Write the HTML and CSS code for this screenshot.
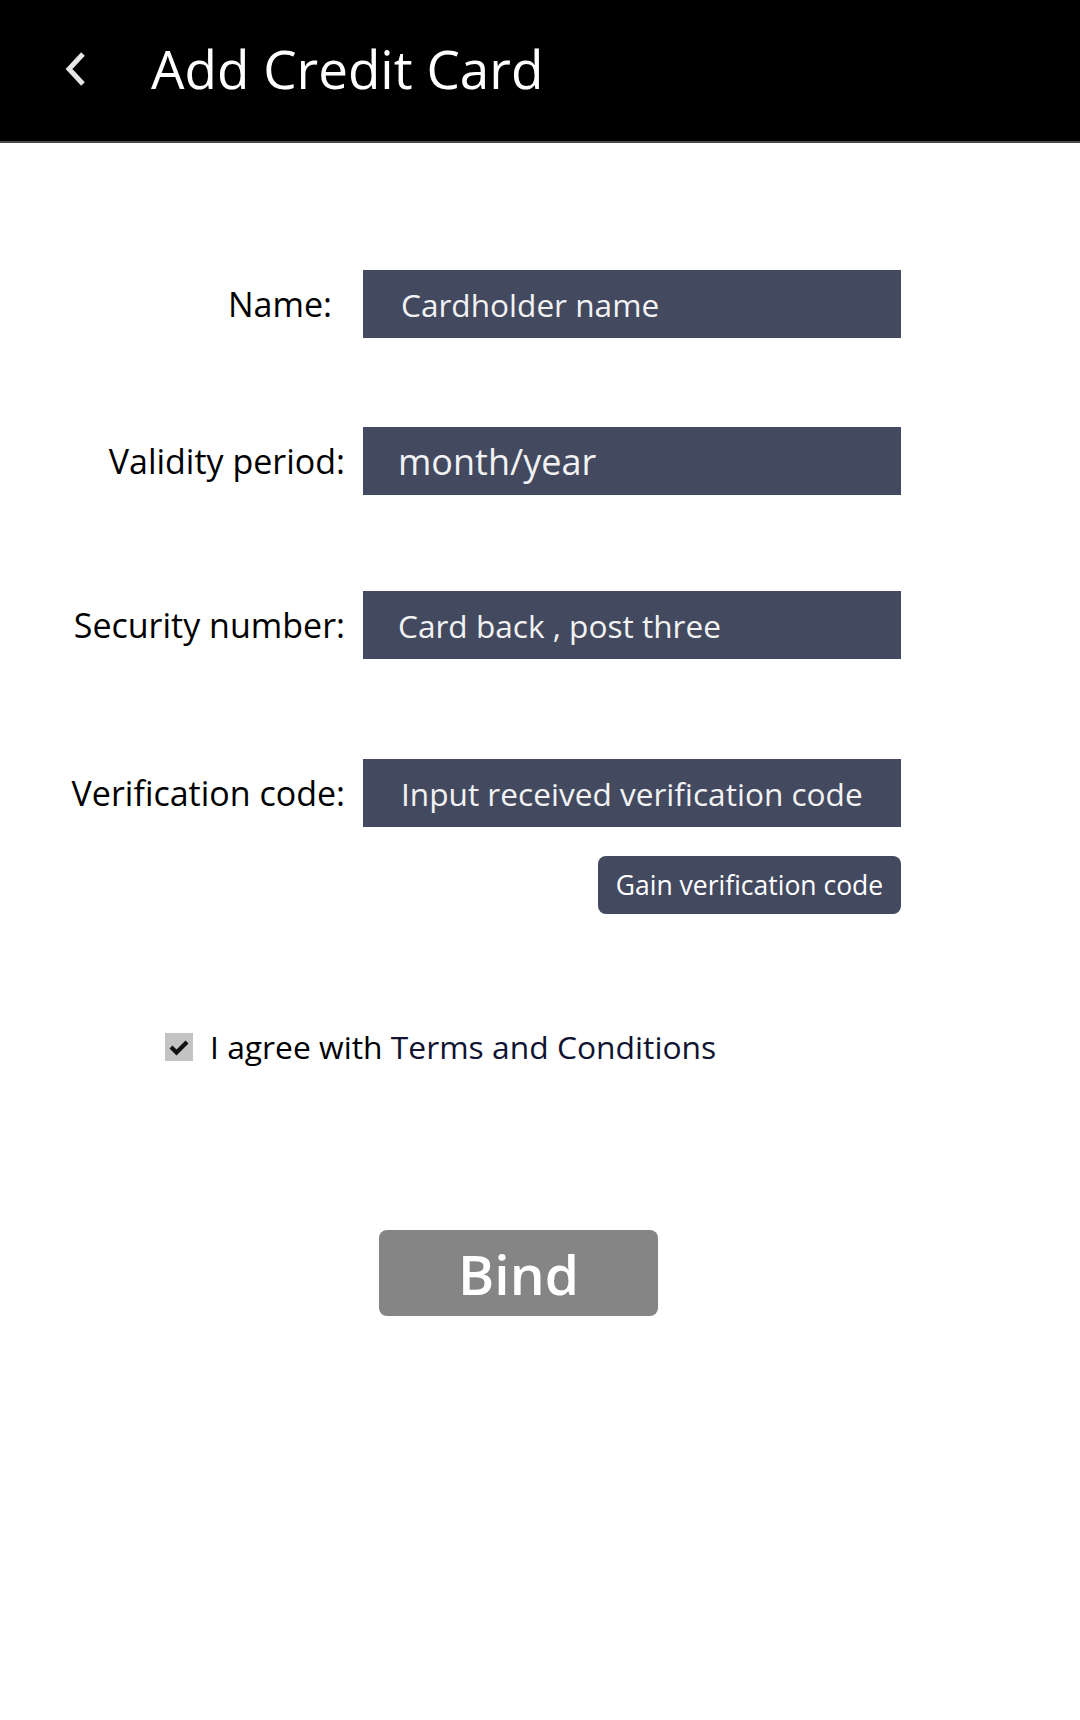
FILE: index.html
```html
<!DOCTYPE html>
<html lang="en">
<head>
<meta charset="utf-8">
<title>Add Credit Card</title>
<link rel="stylesheet" href="styles.css">
</head>
<body>
<header class="topbar">
  <span class="back">
    <svg width="24" height="36" viewBox="0 0 24 36"><path d="M19 3 L5 18 L19 33" fill="none" stroke="#e6e6e6" stroke-width="5"/></svg>
  </span>
  <h1 class="title">Add Credit Card</h1>
</header>
<main class="form">
  <div class="row row-name">
    <label class="label label-name">Name:</label>
    <div class="field">Cardholder name</div>
  </div>
  <div class="row row-valid">
    <label class="label">Validity period:</label>
    <div class="field field-date">month/year</div>
  </div>
  <div class="row row-sec">
    <label class="label">Security number:</label>
    <div class="field">Card back , post three</div>
  </div>
  <div class="row row-ver">
    <label class="label">Verification code:</label>
    <div class="field">Input received verification code</div>
  </div>
  <div class="gain-row">
    <button class="gain">Gain verification code</button>
  </div>
  <div class="agree">
    <span class="check">
      <svg width="28" height="28" viewBox="0 0 28 28"><rect width="28" height="28" fill="#c3c3c3"/><path d="M6 14 L11.5 19.5 L22 9" fill="none" stroke="#111" stroke-width="4.2"/></svg>
    </span>
    <span class="agree-text">I agree with <span class="terms">Terms and Conditions</span></span>
  </div>
  <div class="bind-row">
    <button class="bind">Bind</button>
  </div>
</main>
</body>
</html>
```
FILE: styles.css
```css
html, body {
  margin: 0;
  padding: 0;
  background: #ffffff;
  font-family: "Open Sans", "Noto Sans", sans-serif;
}
.topbar {
  height: 141px;
  background: #000;
  border-bottom: 2px solid #4a4a4a;
  display: flex;
  align-items: center;
}
.back {
  display: flex;
  margin-left: 64px;
  margin-top: -4px;
}
.title {
  margin: 0 0 0 63px;
  color: #fff;
  font-weight: 400;
  font-size: 53px;
  margin-top: -4px;
}
.form {
  display: flex;
  flex-direction: column;
}
.row {
  display: grid;
  grid-template-columns: 345px 538px;
  column-gap: 18px;
  align-items: center;
}
.row-name { margin-top: 127px; }
.row-valid { margin-top: 89px; }
.row-sec { margin-top: 96px; }
.row-ver { margin-top: 100px; }
.label {
  text-align: right;
  font-size: 34px;
  font-weight: 500;
  color: #000;
}
.label-name { padding-right: 13px; }
.field {
  height: 68px;
  background: #434a60;
  color: #f2f2f2;
  font-size: 31.6px;
  display: flex;
  align-items: center;
  padding-left: 38px;
  box-sizing: border-box;
}
.row-valid .field, .row-sec .field { padding-left: 35px; }
.field-date { font-size: 36px; }
.gain-row {
  display: flex;
  margin-top: 29px;
  width: 901px;
  justify-content: flex-end;
}
.gain {
  width: 303px;
  height: 58px;
  border: none;
  border-radius: 8px;
  background: #434a60;
  color: #fff;
  font-family: "Open Sans", "Noto Sans", sans-serif;
  font-size: 26.5px;
  padding: 0;
}
.agree {
  display: flex;
  align-items: center;
  margin-top: 111px;
  margin-left: 165px;
  gap: 17px;
}
.check { display: flex; }
.agree-text {
  font-size: 31.8px;
  color: #000;
}
.terms { color: #101331; }
.bind-row {
  display: flex;
  margin-top: 162px;
  margin-left: 379px;
}
.bind {
  width: 279px;
  height: 86px;
  border: none;
  border-radius: 8px;
  background: #858585;
  color: #fff;
  font-family: "Open Sans", "Noto Sans", sans-serif;
  font-size: 55px;
  font-weight: 600;
  padding: 0;
  line-height: 1;
}
```
